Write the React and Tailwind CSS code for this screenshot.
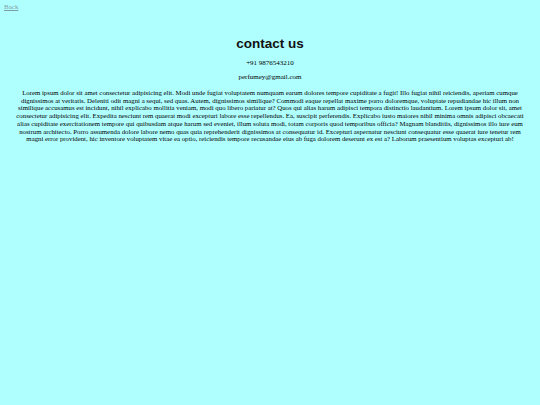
export default function App() {
  return (
    <div className="min-h-screen bg-[#b0ffff] font-['Liberation_Serif',serif] text-black">
      <div className="px-1 pt-[3px] text-[7px] leading-[8px]">
        <a href="#" className="text-[#7f9ea3] underline">
          Back
        </a>
      </div>
      <h1 className="mt-[25px] text-center font-['Liberation_Sans',Arial,sans-serif] text-[13.5px] font-bold leading-[16px] text-[#111]">
        contact us
      </h1>
      <p className="mt-[7px] text-center text-[7px] leading-[8px]">+91 9876543210</p>
      <p className="mt-[6px] text-center text-[7px] leading-[8px]">perfumey@gmail.com</p>
      <p className="mx-auto mt-[8px] w-[514px] text-center text-[6.8px] leading-[7.7px]">
        Lorem ipsum dolor sit amet consectetur adipisicing elit. Modi unde fugiat voluptatem numquam earum dolores tempore cupiditate a fugit! Illo fugiat nihil reiciendis, aperiam cumque dignissimos at veritatis. Deleniti odit magni a sequi, sed quas. Autem, dignissimos similique? Commodi eaque repellat maxime porro doloremque, voluptate repudiandae hic illum non similique accusamus est incidunt, nihil explicabo mollitia veniam, modi quo libero pariatur at? Quos qui alias harum adipisci tempora distinctio laudantium. Lorem ipsum dolor sit, amet consectetur adipisicing elit. Expedita nesciunt rem quaerat modi excepturi labore esse repellendus. Ea, suscipit perferendis. Explicabo iusto maiores nihil minima omnis adipisci obcaecati alias cupiditate exercitationem tempore qui quibusdam atque harum sed eveniet, illum soluta modi, totam corporis quod temporibus officia? Magnam blanditiis, dignissimos illo iure eum nostrum architecto. Porro assumenda dolore labore nemo quas quia reprehenderit dignissimos at consequatur id. Excepturi aspernatur nesciunt consequatur esse quaerat iure tenetur rem magni error provident, hic inventore voluptatem vitae ea optio, reiciendis tempore recusandae eius ab fuga dolorem deserunt ex est a? Laborum praesentium voluptas excepturi ab!
      </p>
    </div>
  );
}
